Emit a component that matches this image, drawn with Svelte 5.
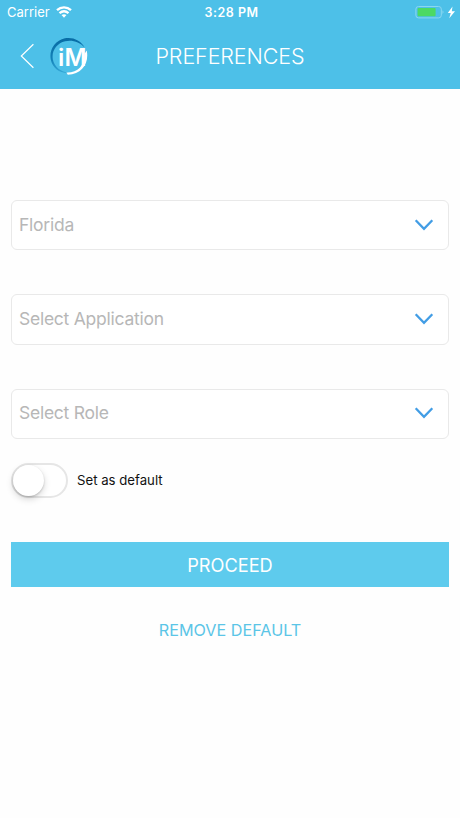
<script lang="ts">
  interface Field {
    key: string;
    label: string;
  }

  const fields: Field[] = [
    { key: 'state', label: 'Florida' },
    { key: 'application', label: 'Select Application' },
    { key: 'role', label: 'Select Role' },
  ];

  let isDefault = $state(false);
</script>

<div class="screen">
  <header class="top">
    <div class="status-bar">
      <div class="carrier">
        <span>Carrier</span>
        <svg width="16" height="12" viewBox="0 0 16 12" fill="none" stroke="#fff" stroke-width="2.3">
          <path d="M1 4.2C5 .4 11 .4 15 4.2" />
          <path d="M3.5 7.2C6.2 4.8 9.8 4.8 12.5 7.2" />
          <path d="M8 11.7 5.5 9.1Q8 7.2 10.5 9.1Z" fill="#fff" stroke="none" />
        </svg>
      </div>
      <span class="time">3:28 PM</span>
      <svg class="battery" width="41" height="14" viewBox="0 0 41 14">
        <rect x=".9" y="1.5" width="25.4" height="11.4" rx="2.6" fill="none" stroke="#8bd7f1" />
        <rect x="2.6" y="3.1" width="18" height="8.2" rx="1" fill="#4cd964" />
        <path d="M27.7 5.2Q29.2 7.2 27.7 9.2Z" fill="#b4e6f7" />
        <path d="M37.5 1.5 32.8 8h2.9l-1.4 5.2L40 6.2h-3.2Z" fill="#fff" />
      </svg>
    </div>

    <nav class="nav-bar">
      <div class="nav-left">
        <button class="back" aria-label="Back">
          <svg width="15" height="26" viewBox="0 0 15 26" fill="none" stroke="#fff" stroke-width="1.2">
            <path d="M13.4 1.2 1.3 13l12.1 11.8" />
          </svg>
        </button>
        <svg class="logo" width="40" height="40" viewBox="0 0 40 40">
          <defs>
            <linearGradient id="ring" x1="0" y1="0" x2="0" y2="1">
              <stop offset="0" stop-color="#086ca5" />
              <stop offset=".6" stop-color="#117fb7" />
              <stop offset="1" stop-color="#35a9d8" />
            </linearGradient>
          </defs>
          <path
            d="M35.6 11.4C31.8 4.2 23.6.8 15.9 2.3 5.9 4.4-.2 14.1 1.8 23.8 3.8 33 11.6 37.8 20.3 36.8 12 36 5.2 30.9 3.8 23.2 2.5 14.4 7.8 7.2 16.2 5.2 23.2 3.6 30.5 5.8 35.6 11.4Z"
            fill="url(#ring)"
          />
          <path d="M37.8 14.5C40.2 27.5 33 38.2 18.8 38.8L17.4 36.6C28.8 37 35.6 29.4 35.4 18Z" fill="#fff" />
          <text x="8.9" y="30">i</text>
          <text x="15.6" y="30" textLength="22" lengthAdjust="spacingAndGlyphs">M</text>
        </svg>
      </div>
      <h1>PREFERENCES</h1>
    </nav>
  </header>

  <main>
    <div class="fields">
      {#each fields as field (field.key)}
        <button class="select">
          <span>{field.label}</span>
          <svg width="20" height="13" viewBox="0 0 20 13" fill="none" stroke="#429de5" stroke-width="2.3">
            <path d="M1.7 2.3 10 10.8 18.3 2.3" />
          </svg>
        </button>
      {/each}
    </div>

    <div class="default-row">
      <button
        class="switch"
        class:on={isDefault}
        role="switch"
        aria-checked={isDefault}
        aria-label="Set as default"
        onclick={() => (isDefault = !isDefault)}
      >
        <span class="thumb"></span>
      </button>
      <span class="default-label">Set as default</span>
    </div>

    <button class="proceed">PROCEED</button>
    <button class="remove">REMOVE DEFAULT</button>
  </main>
</div>

<style>
  :global(body) {
    background: #fff;
  }

  .screen {
    height: 818px;
    overflow: hidden;
    font-family: Inter, 'Liberation Sans', sans-serif;
    background: #fefefe;
  }

  button {
    margin: 0;
    padding: 0;
    border: none;
    background: none;
    font-family: inherit;
    cursor: pointer;
  }

  svg {
    display: block;
    flex-shrink: 0;
  }

  .top {
    height: 89px;
    background: #4dc0e8;
    color: #fff;
  }

  .status-bar {
    display: grid;
    grid-template-columns: 1fr auto 1fr;
    align-items: center;
    height: 24px;
    padding: 0 4px 0 7px;
    font-size: 13px;
  }

  .carrier {
    display: flex;
    align-items: center;
    gap: 6px;
  }

  .time {
    font-weight: 600;
    font-size: 12.5px;
    letter-spacing: 0.5px;
  }

  .battery {
    justify-self: end;
  }

  .nav-bar {
    display: grid;
    grid-template-columns: 1fr auto 1fr;
    align-items: center;
    height: 64px;
    padding: 0 20px;
  }

  .nav-left {
    display: flex;
    align-items: center;
    gap: 14px;
  }

  .logo text {
    font-family: Inter, sans-serif;
    font-size: 24px;
    font-weight: 600;
    fill: #fff;
  }

  h1 {
    margin: 0;
    font-size: 21.5px;
    font-weight: 300;
    letter-spacing: -0.1px;
  }

  main {
    display: flex;
    flex-direction: column;
    padding: 111px 11px 0;
  }

  .fields {
    display: flex;
    flex-direction: column;
    gap: 44.1px;
  }

  .select {
    display: flex;
    align-items: center;
    justify-content: space-between;
    box-sizing: border-box;
    height: 50.3px;
    padding: 0 14px 2px 7px;
    border: 1px solid #e9e9e9;
    border-radius: 6px;
    background: #fff;
    font-size: 17.5px;
    letter-spacing: -0.25px;
    color: #b7b7b7;
  }

  .default-row {
    display: flex;
    align-items: center;
    gap: 9px;
    height: 35px;
    margin-top: 23.9px;
  }

  .switch {
    display: flex;
    box-sizing: border-box;
    width: 57px;
    height: 35px;
    padding: 0;
    border: 2px solid #e6e6e6;
    border-radius: 18px;
    background: #fff;
  }

  .thumb {
    width: 31px;
    height: 31px;
    border-radius: 50%;
    background: #fff;
    box-shadow: 0 3px 7px rgba(0, 0, 0, 0.17), 0 1px 2px rgba(0, 0, 0, 0.18);
  }

  .on {
    background: #4cd964;
    border-color: #4cd964;
  }

  .on .thumb {
    margin-left: auto;
  }

  .default-label {
    font-size: 13.2px;
    color: #111;
  }

  .proceed {
    height: 45px;
    margin-top: 44px;
    padding-top: 1px;
    background: #5ecbed;
    font-size: 18.2px;
    color: #fff;
  }

  .remove {
    align-self: center;
    margin-top: 33px;
    font-size: 16.2px;
    color: #5bc5e7;
  }
</style>
